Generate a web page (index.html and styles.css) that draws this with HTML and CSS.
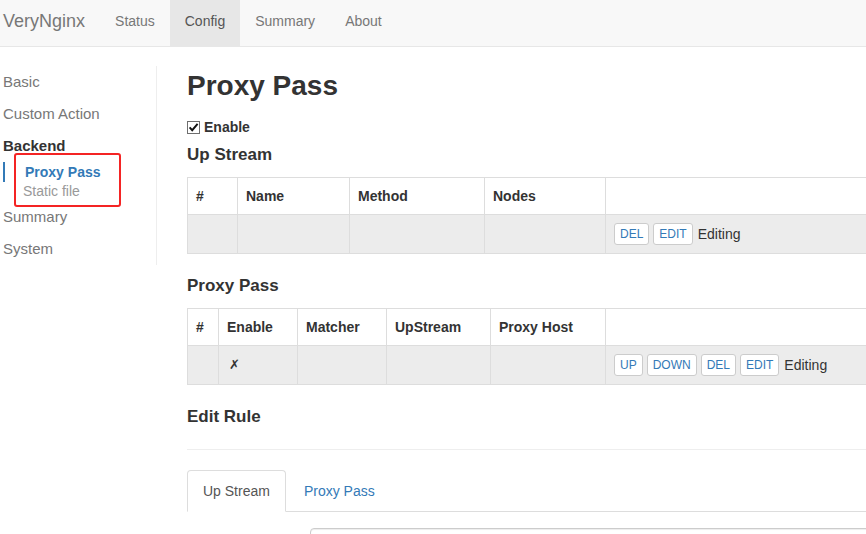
FILE: index.html
```html
<!DOCTYPE html>
<html lang="en">
<head>
<meta charset="utf-8">
<title>VeryNginx</title>
<link rel="stylesheet" href="styles.css">
</head>
<body>
<nav class="navbar">
  <a class="brand">VeryNginx</a>
  <ul class="nav-links">
    <li><a>Status</a></li>
    <li class="active"><a>Config</a></li>
    <li><a>Summary</a></li>
    <li><a>About</a></li>
  </ul>
</nav>
<div class="layout">
  <aside class="sidebar">
    <ul class="side-nav">
      <li><a>Basic</a></li>
      <li><a>Custom Action</a></li>
      <li class="group"><a class="group-title">Backend</a>
        <ul class="sub-nav">
          <li class="active"><a>Proxy Pass</a></li>
          <li><a>Static file</a></li>
          <span class="mark"></span>
        </ul>
      </li>
      <li><a>Summary</a></li>
      <li><a>System</a></li>
    </ul>
  </aside>
  <main class="content">
    <h1 class="page-title">Proxy Pass</h1>
    <label class="enable">
      <svg class="checkbox" width="13" height="13" viewBox="0 0 13 13"><rect x="0.5" y="0.5" width="12" height="12" fill="#fff" stroke="#6e6e6e"/><path d="M2.6 6.4 L5.2 9.2 L10.6 2.8" fill="none" stroke="#111" stroke-width="1.9"/></svg>
      <span>Enable</span>
    </label>

    <h4 class="section-title">Up Stream</h4>
    <table class="grid">
      <colgroup><col style="width:50px"><col style="width:112px"><col style="width:135px"><col style="width:121px"><col></colgroup>
      <thead><tr><th>#</th><th>Name</th><th>Method</th><th>Nodes</th><th></th></tr></thead>
      <tbody><tr><td></td><td></td><td></td><td></td>
        <td><div class="actions"><button class="btn">DEL</button><button class="btn">EDIT</button><span class="editing">Editing</span></div></td></tr></tbody>
    </table>

    <h4 class="section-title">Proxy Pass</h4>
    <table class="grid">
      <colgroup><col style="width:31px"><col style="width:79px"><col style="width:89px"><col style="width:104px"><col style="width:115px"><col></colgroup>
      <thead><tr><th>#</th><th>Enable</th><th>Matcher</th><th>UpStream</th><th>Proxy Host</th><th></th></tr></thead>
      <tbody><tr><td></td><td class="cross">✗</td><td></td><td></td><td></td>
        <td><div class="actions"><button class="btn">UP</button><button class="btn">DOWN</button><button class="btn">DEL</button><button class="btn">EDIT</button><span class="editing">Editing</span></div></td></tr></tbody>
    </table>

    <h4 class="section-title edit-title">Edit Rule</h4>
    <hr class="divider">
    <ul class="tabs">
      <li class="active"><a>Up Stream</a></li>
      <li><a>Proxy Pass</a></li>
    </ul>
    <div class="form-row">
      <input class="form-control" type="text">
    </div>
  </main>
</div>
</body>
</html>
```
FILE: styles.css
```css
html, body {
  overflow: hidden;
}
body {
  margin: 0;
  font-family: "Liberation Sans", Arial, sans-serif;
  font-size: 14px;
  line-height: 20px;
  color: #333;
  background: #fff;
}
ul { list-style: none; margin: 0; padding: 0; }
a { text-decoration: none; cursor: pointer; }

/* navbar */
.navbar {
  display: flex;
  height: 46px;
  background: #f8f8f8;
  border-bottom: 1px solid #e7e7e7;
}
.brand {
  display: block;
  padding: 11px 15px 0 3px;
  font-size: 18px;
  line-height: 20px;
  color: #777;
}
.nav-links { display: flex; }
.nav-links a {
  display: block;
  height: 46px;
  box-sizing: border-box;
  padding: 11px 15px 0;
  color: #777;
}
.nav-links .active a {
  background: #e7e7e7;
  color: #555;
}

/* layout */
.layout {
  display: flex;
  align-items: flex-start;
  width: 1000px;
  margin-top: 19px;
}
.sidebar {
  width: 156px;
  flex: none;
  border-right: 1px solid #eee;
}
.side-nav > li > a {
  display: block;
  padding: 6px 0 6px 3px;
  font-size: 15px;
  line-height: 20px;
  color: #777;
}
.side-nav > li > a.group-title {
  color: #333;
  font-weight: bold;
}
.sub-nav {
  position: relative;
}
.sub-nav a {
  display: block;
  padding-left: 23px;
  line-height: 20px;
  font-size: 14px;
  color: #999;
}
.sub-nav .active a {
  margin-left: 3px;
  padding-left: 20px;
  border-left: 2px solid #337ab7;
  color: #337ab7;
  font-weight: bold;
}
.sub-nav li + li a { line-height: 19px; }
.mark {
  position: absolute;
  left: 14px;
  top: -9px;
  width: 107px;
  height: 54px;
  box-sizing: border-box;
  border: 2px solid #f42424;
  border-radius: 3px;
}

/* content */
.content {
  flex: 1;
  padding: 4px 0 0 30px;
}
.page-title {
  margin: 0;
  font-size: 28px;
  line-height: 32px;
  font-weight: bold;
  color: #333;
}
.enable {
  display: flex;
  align-items: center;
  margin-top: 15px;
  margin-bottom: 8px;
  font-weight: bold;
}
.checkbox { margin-right: 4px; margin-top: 0; }
.section-title {
  margin: 0 0 12px;
  font-size: 17px;
  line-height: 20px;
  font-weight: bold;
}
.grid {
  width: 100%;
  table-layout: fixed;
  border-collapse: collapse;
  margin-bottom: 22px;
}
.grid th, .grid td {
  border: 1px solid #ddd;
  padding: 8px;
  text-align: left;
  vertical-align: middle;
  line-height: 20px;
}
.grid th { font-weight: bold; }
.grid tbody tr { background: #ececec; }
.grid .cross { padding-left: 10px; font-family: "DejaVu Sans", sans-serif; font-size: 13px; }
.actions {
  display: flex;
  align-items: center;
  gap: 4px;
}
.btn {
  font-family: inherit;
  font-size: 12px;
  line-height: 18px;
  padding: 1px 5px;
  color: #337ab7;
  background: #fff;
  border: 1px solid #ccc;
  border-radius: 3px;
}
.editing { margin-left: 1px; }

.edit-title { margin-bottom: 0; }
.divider {
  margin: 22px 0 20px;
  border: 0;
  border-top: 1px solid #eee;
}
.tabs {
  display: flex;
  border-bottom: 1px solid #ddd;
}
.tabs li { margin-bottom: -1px; }
.tabs a {
  display: block;
  margin-right: 2px;
  padding: 10px 15px;
  border: 1px solid transparent;
  border-radius: 4px 4px 0 0;
  color: #337ab7;
}
.tabs .active a {
  color: #555;
  background: #fff;
  border-color: #ddd #ddd transparent;
}
.form-row {
  padding: 16px 0 0 123px;
}
.form-control {
  display: block;
  width: 100%;
  height: 34px;
  box-sizing: border-box;
  border: 1px solid #ccc;
  border-radius: 4px;
  box-shadow: inset 0 1px 1px rgba(0,0,0,.075);
}
```
